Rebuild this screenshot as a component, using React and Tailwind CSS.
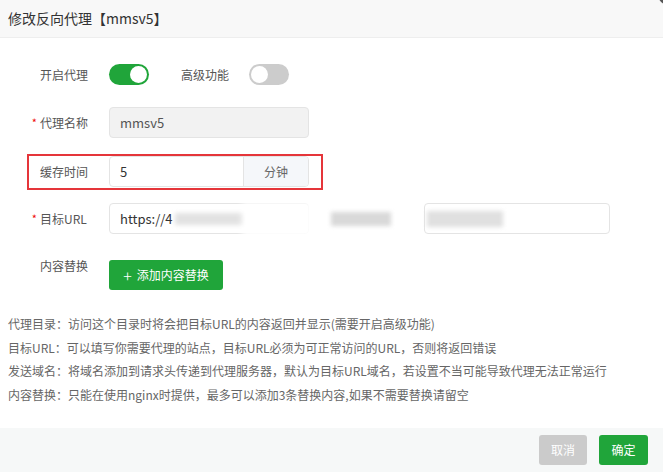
const font = { fontFamily: '"Noto Sans CJK SC", "Noto Sans", sans-serif' };

function Toggle({ on }) {
  return (
    <div className={`w-[40px] h-[21px] rounded-full flex items-center px-[2px] ${on ? "bg-[#20a53a] justify-end" : "bg-[#cccccc] justify-start"}`}>
      <div className="w-[17px] h-[17px] rounded-full bg-white" />
    </div>
  );
}

function Label({ children, required }) {
  return (
    <div className="w-[89px] shrink-0 flex items-center justify-end pr-[1px] text-[12px] text-[#555]">
      {required && <span className="text-[#ef0808] mr-[3px] text-[11px]">*</span>}
      <span className="w-[48px]">{children}</span>
    </div>
  );
}

export default function App() {
  return (
    <div className="relative w-[663px] h-[472px] bg-white overflow-hidden flex flex-col" style={font}>
      {/* header */}
      <div className="h-[38px] shrink-0 bg-[#f8f8f8] border-b border-[#eeeeee] flex items-center pl-[8px] text-[14px] text-[#333]">
        修改反向代理【mmsv5】
      </div>
      <div className="absolute right-[-22px] top-[-22px] w-[28px] h-[28px] rounded-full bg-[#555]" />

      {/* body */}
      <div className="flex-1 flex flex-col">
        <div className="flex items-center h-[31px] mt-[21px]">
          <Label>开启代理</Label>
          <div className="ml-[20px]"><Toggle on /></div>
          <div className="ml-[32px] text-[12px] text-[#555]">高级功能</div>
          <div className="ml-[20px]"><Toggle /></div>
        </div>

        <div className="flex items-center h-[31px] mt-[17px]">
          <Label required>代理名称</Label>
          <div className="ml-[20px] w-[200px] h-[31px] rounded-[4px] border border-[#e4e4e4] bg-[#f2f2f2] flex items-center pl-[10px] text-[13px] text-[#555]">
            mmsv5
          </div>
        </div>

        <div className="relative flex items-center h-[31px] mt-[18px]">
          <div className="absolute left-[27px] top-[-2px] w-[296px] h-[36px] border-2 border-[#e5353a]" />
          <Label>缓存时间</Label>
          <div className="ml-[20px] w-[200px] h-[31px] rounded-[4px] border border-[#e4e4e4] flex overflow-hidden">
            <div className="flex-1 flex items-center pl-[10px] text-[13px] text-[#333]">5</div>
            <div className="w-[65px] bg-[#f5f7fa] border-l border-[#e4e4e4] flex items-center justify-center text-[12px] text-[#666]">分钟</div>
          </div>
        </div>

        <div className="flex items-center h-[31px] mt-[16px]">
          <Label required>目标URL</Label>
          <div className="relative ml-[20px] w-[200px] h-[31px] rounded-[4px] border border-[#e4e4e4] flex items-center pl-[10px] text-[13px] text-[#333]">
            https://4
            <div className="ml-[2px] w-[70px] h-[12px] bg-[#e2e2e2] blur-[2px]" />
            <div className="absolute right-[-4px] top-[-2px] w-[70px] h-[35px] bg-white blur-[3px]" />
          </div>
          <div className="ml-[22px] w-[60px] h-[14px] bg-[#d9d9d9] blur-[2px]" />
          <div className="ml-[33px] w-[186px] h-[31px] rounded-[4px] border border-[#e4e4e4] flex items-center pl-[2px]">
            <div className="w-[76px] h-[16px] bg-[#e0e0e0] blur-[2px]" />
          </div>
        </div>

        <div className="flex items-start mt-[26px]">
          <div className="-mt-[2px] leading-[16px]"><Label>内容替换</Label></div>
          <button className="ml-[20px] w-[114px] h-[30px] rounded-[3px] bg-[#20a53a] text-white text-[12px] flex items-center justify-center gap-[5px]">
            <span className="text-[16px] leading-none font-light">+</span>
            <span>添加内容替换</span>
          </button>
        </div>

        <div className="mt-[22px] pl-[8px] text-[12px] text-[#666] leading-[23.6px]">
          <div>代理目录：访问这个目录时将会把目标URL的内容返回并显示(需要开启高级功能)</div>
          <div>目标URL：可以填写你需要代理的站点，目标URL必须为可正常访问的URL，否则将返回错误</div>
          <div>发送域名：将域名添加到请求头传递到代理服务器，默认为目标URL域名，若设置不当可能导致代理无法正常运行</div>
          <div>内容替换：只能在使用nginx时提供，最多可以添加3条替换内容,如果不需要替换请留空</div>
        </div>
      </div>

      {/* footer */}
      <div className="h-[44px] shrink-0 bg-[#f6f8f8] flex items-center justify-end gap-[12px] pr-[15px]">
        <button className="w-[48px] h-[30px] rounded-[3px] bg-[#cbcbcb] text-white text-[12px]">取消</button>
        <button className="w-[49px] h-[30px] rounded-[3px] bg-[#20a53a] text-white text-[12px]">确定</button>
      </div>
    </div>
  );
}
